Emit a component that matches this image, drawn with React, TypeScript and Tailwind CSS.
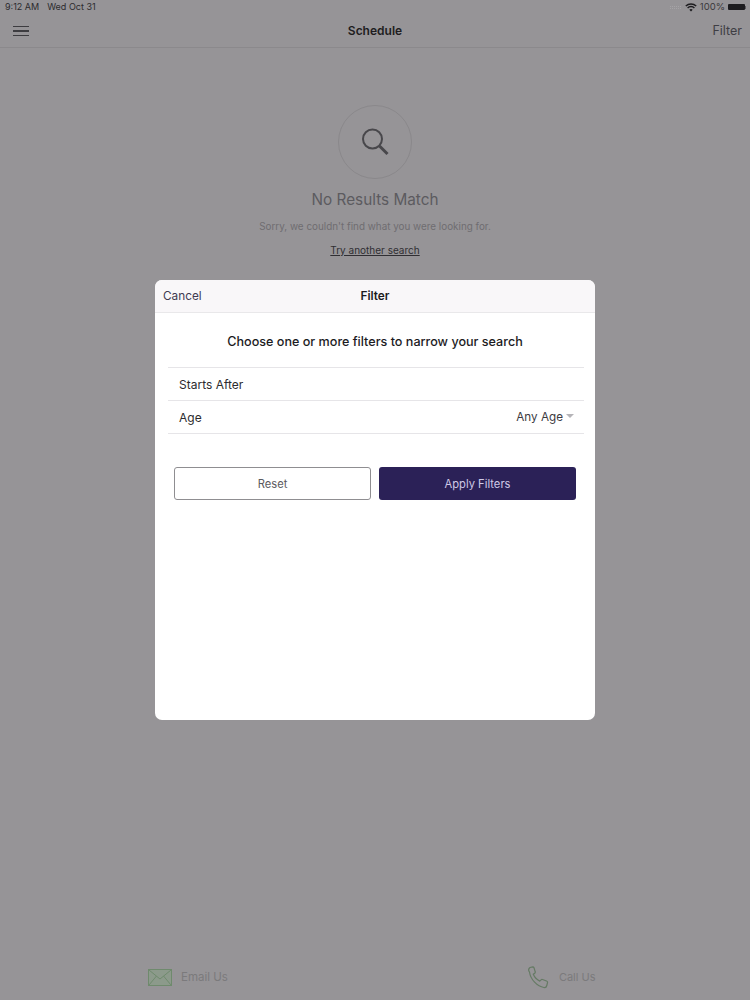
import React from 'react';

const FONT = "font-['Inter','Liberation_Sans',sans-serif]";

const StatusBar = () => (
  <div className="flex h-[14px] items-center justify-between pl-[5px] pr-[4px] text-[9px] leading-[14px] text-[#2c2b2e]">
    <div className="flex gap-2">
      <span>9:12 AM</span>
      <span>Wed Oct 31</span>
    </div>
    <div className="flex items-center gap-[3px]">
      <div className="mr-[1px] h-[3px] w-[11px] border-y border-dotted border-[#a5a3a6]" />
      <svg width="12" height="9" viewBox="0 0 12 9" fill="none" stroke="#1d1c1f" strokeWidth="1.4">
        <path d="M.8 3.1a7.4 7.4 0 0 1 10.4 0" />
        <path d="M2.6 4.9a4.8 4.8 0 0 1 6.8 0" />
        <path d="M6 8.6 4.3 6.8a2.4 2.4 0 0 1 3.4 0z" fill="#1d1c1f" stroke="none" />
      </svg>
      <span className="text-[9.5px] text-[#3a393c]">100%</span>
      <div className="flex items-center">
        <div className="h-[6px] w-[17px] rounded-[1px] bg-[#1d1c1f]" />
        <div className="h-[3px] w-[1px] bg-[#5a585c]" />
      </div>
    </div>
  </div>
);

const Header = () => (
  <div className="grid h-[34px] grid-cols-3 items-center border-b border-[#8b898c] px-[8px] pt-[1px]">
    <div className="ml-[5px] flex w-[16px] flex-col gap-[3px]">
      <div className="h-[1.5px] bg-[#3d3c40]" />
      <div className="h-[1.5px] bg-[#3d3c40]" />
      <div className="h-[1.5px] bg-[#3d3c40]" />
    </div>
    <div className="text-center text-[12px] font-semibold text-[#1e1d20]">Schedule</div>
    <div className="text-right text-[12.5px] text-[#3f3e44]">Filter</div>
  </div>
);

const EmptyState = () => (
  <div className="flex flex-col items-center pt-[57px]">
    <div className="flex h-[74px] w-[74px] items-center justify-center rounded-full border border-[#8a888b]">
      <svg width="28" height="28" viewBox="0 0 28 28" fill="none" stroke="#48474b" strokeWidth="2">
        <circle cx="11.5" cy="11" r="9.5" />
        <path d="m18.5 18 8 8" strokeWidth="3" />
      </svg>
    </div>
    <div className="mt-[11px] text-[15.3px] leading-[20px] text-[#5c5b5f]">No Results Match</div>
    <div className="mt-[8px] text-[9.9px] leading-[16px] text-[#6f6d71]">
      Sorry, we couldn't find what you were looking for.
    </div>
    <div className="mt-[8px] text-[10px] leading-[16px] text-[#302f33] underline">Try another search</div>
  </div>
);

const FilterRow = ({ label, value }: { label: string; value?: string }) => (
  <div className="flex h-[33px] items-center justify-between border-b border-[#e6e5e8] pl-[11px] pr-[10px] pt-[1px] text-[12px] text-[#2c2b2e]">
    <span>{label}</span>
    {value && (
      <span className="flex items-center gap-[3px] text-[11.7px] text-[#3c3b3f]">
        {value}
        <span className="mb-[3px] h-0 w-0 border-x-[4px] border-t-[4px] border-x-transparent border-t-[#b5b4b8]" />
      </span>
    )}
  </div>
);

const FilterModal = () => (
  <div className="absolute left-[155px] top-[280px] flex h-[440px] w-[440px] flex-col overflow-hidden rounded-[7px] bg-white">
    <div className="relative flex h-[33px] items-center justify-center border-b border-[#e9e8ea] bg-[#f9f7f9] pt-[2px] text-[11.8px]">
      <span className="absolute left-[8px] text-[#3f3b52]">Cancel</span>
      <span className="font-semibold text-[#1c1b1e]">Filter</span>
    </div>
    <div className="ml-[13px] mr-[11px] flex h-[55px] items-center justify-center border-b border-[#e6e5e8] pr-[2px] pt-[4px] text-[12.6px] font-medium text-[#1c1b1e]">
      Choose one or more filters to narrow your search
    </div>
    <div className="ml-[13px] mr-[11px]">
      <FilterRow label="Starts After" />
      <FilterRow label="Age" value="Any Age" />
    </div>
    <div className="mt-[33px] flex gap-[8px] pl-[19px] text-[11.2px]">
      <div className="flex h-[33px] w-[197px] items-center justify-center rounded-[3px] border border-[#8f8e91] pt-[2px] text-[#5b5a5e]">
        Reset
      </div>
      <div className="flex h-[33px] w-[197px] items-center justify-center rounded-[3px] bg-[#2b2157] pt-[2px] text-[#cfc9e6]">
        Apply Filters
      </div>
    </div>
  </div>
);

const Footer = () => (
  <div className="mt-auto flex h-[46px] items-center text-[11.5px] text-[#7b7a7c]">
    <div className="ml-[148px] flex items-center gap-[9px]">
      <svg width="24" height="17" viewBox="0 0 24 17" fill="none" stroke="#6f8a6d" strokeWidth="1">
        <rect x=".5" y=".5" width="23" height="16" fill="#8c9a8b" />
        <path d="m1 1 11 9L23 1M1 16l7.5-9M23 16l-7.5-9" />
      </svg>
      <span className="pt-[1px]">Email Us</span>
    </div>
    <div className="ml-[300px] flex items-center gap-[9px]">
      <svg width="22" height="23" viewBox="0 0 22 23" fill="none" stroke="#657a64" strokeWidth="1.2">
        <path d="M2 1.5 4.8.8c.6 0 1 .4 1.2 1l1.2 4c.2.6 0 1-.5 1.4L5.300 8.300c1.200 3 3.500 5.400 6.500 6.800l1.300-1.300c.4-.4.900-.5 1.400-.3l4 1.500c.7.300 1.200 1 1 1.700l-.7 2.800c-.3 1.200-1.500 2.300-2.900 2-6.500-1-13.500-8-14.400-15.500C.3 4.500.800 2.500 2 1.500Z" />
      </svg>
      <span className="text-[11px]">Call Us</span>
    </div>
  </div>
);

export default function App() {
  return (
    <div className={`relative flex h-[1000px] w-[750px] flex-col overflow-hidden bg-[#969497] ${FONT}`}>
      <StatusBar />
      <Header />
      <EmptyState />
      <Footer />
      <FilterModal />
    </div>
  );
}
